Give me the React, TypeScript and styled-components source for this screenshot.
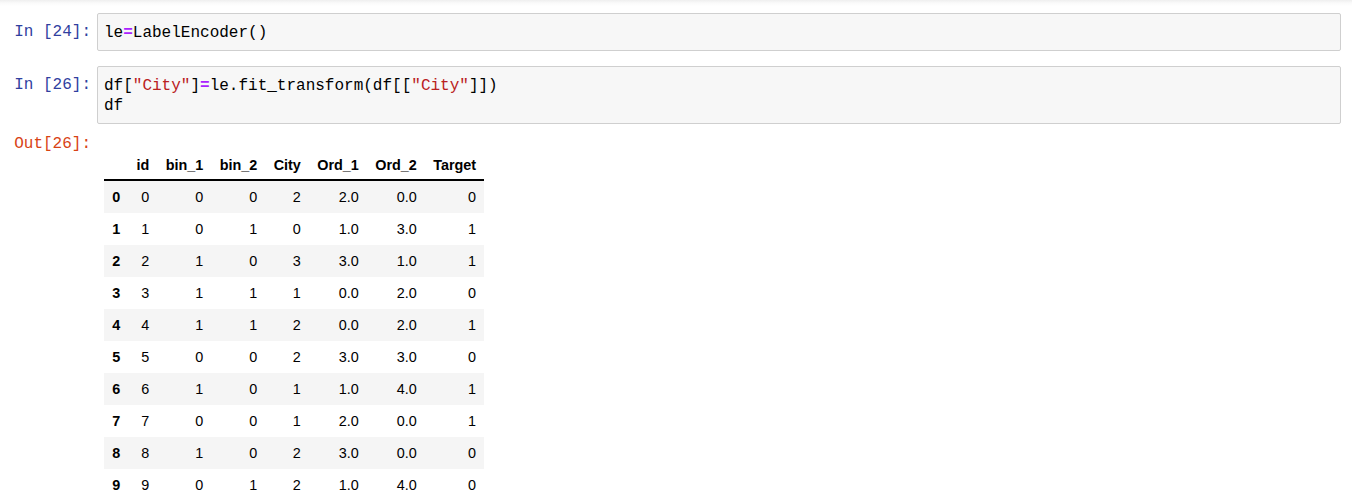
import React from "react";
import styled, { createGlobalStyle } from "styled-components";

const Global = createGlobalStyle`
  html, body { margin: 0; padding: 0; background: #fff; }
  body { font-family: "Liberation Sans", Arial, sans-serif; }
`;

const Notebook = styled.div`
  width: 1352px;
  height: 502px;
  overflow: hidden;
  box-sizing: border-box;
  padding: 13px 11px 0 0;
  background: linear-gradient(to bottom, #efefef 0px, #fafafa 3px, #ffffff 6px);
  display: flex;
  flex-direction: column;
`;

const Cell = styled.div<{ $gap?: number }>`
  display: flex;
  flex-direction: column;
  margin-bottom: ${(p) => p.$gap ?? 0}px;
`;

const Row = styled.div`
  display: flex;
  align-items: flex-start;
`;

const Prompt = styled.div<{ $out?: boolean }>`
  width: 97px;
  flex: none;
  box-sizing: border-box;
  padding: ${(p) => (p.$out ? "10px" : "9px")} 6px 0 0;
  text-align: right;
  font-family: "Liberation Mono", "DejaVu Sans Mono", monospace;
  font-size: 16px;
  line-height: 20px;
  color: ${(p) => (p.$out ? "#D84315" : "#303F9F")};
  white-space: pre;
`;

const InputArea = styled.div`
  flex: 1;
  background: #f7f7f7;
  border: 1px solid #cfcfcf;
  border-radius: 2px;
  padding: 9px 6px 7px;
  font-family: "Liberation Mono", "DejaVu Sans Mono", monospace;
  font-size: 16px;
  line-height: 20px;
  color: #000;
  white-space: pre;
`;

const Op = styled.span`
  color: #aa22ff;
  font-weight: bold;
`;

const Str = styled.span`
  color: #ba2121;
`;

const OutputArea = styled.div`
  padding: 23px 0 0 7px;
`;

const Table = styled.table`
  border-collapse: collapse;
  border-spacing: 0;
  font-family: "Liberation Sans", Arial, sans-serif;
  font-size: 14.4px;
  color: #000;
  border: none;
`;

const THead = styled.thead`
  border-bottom: 2px solid #000;
`;

const Th = styled.th<{ $head?: boolean }>`
  text-align: right;
  font-weight: bold;
  padding: ${(p) => (p.$head ? "10px 8.2px 6px" : "8px 8.2px")};
  line-height: 16px;
  white-space: nowrap;
`;

const Tr = styled.tr`
  &:nth-child(odd) {
    background: #f5f5f5;
  }
`;

const Td = styled.td`
  text-align: right;
  padding: 8px 8.2px;
  line-height: 16px;
  white-space: nowrap;
`;

const headers = ["", "id", "bin_1", "bin_2", "City", "Ord_1", "Ord_2", "Target"];
const data: (string | number)[][] = [
  [0, 0, 0, 2, "2.0", "0.0", 0],
  [1, 0, 1, 0, "1.0", "3.0", 1],
  [2, 1, 0, 3, "3.0", "1.0", 1],
  [3, 1, 1, 1, "0.0", "2.0", 0],
  [4, 1, 1, 2, "0.0", "2.0", 1],
  [5, 0, 0, 2, "3.0", "3.0", 0],
  [6, 1, 0, 1, "1.0", "4.0", 1],
  [7, 0, 0, 1, "2.0", "0.0", 1],
  [8, 1, 0, 2, "3.0", "0.0", 0],
  [9, 0, 1, 2, "1.0", "4.0", 0],
];

export default function App() {
  return (
    <>
      <Global />
      <Notebook>
        <Cell $gap={15}>
          <Row>
            <Prompt>In [24]:</Prompt>
            <InputArea>
              le<Op>=</Op>LabelEncoder()
            </InputArea>
          </Row>
        </Cell>
        <Cell>
          <Row>
            <Prompt>In [26]:</Prompt>
            <InputArea>
              df[<Str>"City"</Str>]<Op>=</Op>le.fit_transform(df[[<Str>"City"</Str>]]){"\n"}df
            </InputArea>
          </Row>
          <Row>
            <Prompt $out>Out[26]:</Prompt>
            <OutputArea>
              <Table>
                <THead>
                  <tr>
                    {headers.map((h, i) => (
                      <Th $head key={i}>{h}</Th>
                    ))}
                  </tr>
                </THead>
                <tbody>
                  {data.map((r, i) => (
                    <Tr key={i}>
                      <Th>{i}</Th>
                      {r.map((v, j) => (
                        <Td key={j}>{v}</Td>
                      ))}
                    </Tr>
                  ))}
                </tbody>
              </Table>
            </OutputArea>
          </Row>
        </Cell>
      </Notebook>
    </>
  );
}
